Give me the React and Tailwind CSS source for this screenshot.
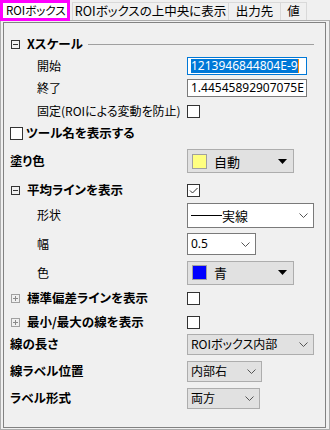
const jp = "font-['Noto_Sans_CJK_JP',sans-serif] [font-feature-settings:'palt']"

function Minus({ gray }) {
  return (
    <span className={`relative flex items-center justify-center w-[9px] h-[9px] border ${gray ? 'border-[#a0a0a0]' : 'border-[#333]'}`}>
      <span className={`w-[5px] h-px ${gray ? 'bg-[#a0a0a0]' : 'bg-[#333]'}`} />
    </span>
  )
}

function Plus() {
  return (
    <svg width="9" height="9" viewBox="0 0 9 9" className="shrink-0">
      <rect x="0.5" y="0.5" width="8" height="8" fill="none" stroke="#a0a0a0" />
      <path d="M2 4.5h5M4.5 2v5" stroke="#8a8a8a" />
    </svg>
  )
}

function Check({ checked }) {
  return (
    <span className="flex w-[13px] h-[13px] border border-[#333] bg-white">
      {checked && (
        <svg width="11" height="11" viewBox="0 0 11 11">
          <path d="M2 5.5L4.5 8L9.5 3" fill="none" stroke="#333" strokeWidth="1" />
        </svg>
      )}
    </span>
  )
}

function Chevron() {
  return (
    <svg width="9" height="5" viewBox="0 0 9 5" className="ml-auto mr-[5px] shrink-0">
      <path d="M0.5 0.5L4.5 4.5L8.5 0.5" fill="none" stroke="#555" />
    </svg>
  )
}

function ColorCombo({ color, label }) {
  return (
    <div className="flex items-center w-[107px] h-[24px] border border-[#adadad] bg-[#e1e1e1] pl-[4px]">
      <span className={`w-[15px] h-[15px] border border-[#a0a0a0] ${color}`} />
      <span className="ml-[7px] text-[13px] leading-none">{label}</span>
      <svg width="9" height="5" viewBox="0 0 9 5" className="ml-auto mr-[6px]">
        <polygon points="0,0 9,0 4.5,5" fill="#000" />
      </svg>
    </div>
  )
}

function Combo({ w, h, bg, border, children }) {
  return (
    <div className={`flex items-center ${w} ${h} ${bg} border ${border} pl-[3px]`}>
      <span className="text-[12px] leading-none flex items-center whitespace-nowrap">{children}</span>
      <Chevron />
    </div>
  )
}

function Row({ h, label, children }) {
  return (
    <div className={`flex items-center ${h}`}>
      <div className="w-[183px] flex items-center text-[12px] leading-none">{label}</div>
      <div className="flex items-center">{children}</div>
    </div>
  )
}

export default function App() {
  return (
    <div className={`w-[330px] h-[430px] bg-[#f0f0f0] text-black ${jp}`}>
      <div className="flex items-end h-[20px]">
        <div className="relative z-10 -mb-[1px] flex items-center w-[70px] h-[21px] border-[3px] border-[#ff00ff] bg-white pl-[3px] text-[11.5px] leading-none whitespace-nowrap overflow-hidden">
          ROIボックス
        </div>
        <div className="ml-[2px] flex items-center justify-center w-[157px] h-[18px] border-t border-l border-r border-[#d9d9d9] text-[12.5px] leading-none whitespace-nowrap">
          ROIボックスの上中央に表示
        </div>
        <div className="flex items-center justify-center w-[52px] h-[18px] border-t border-r border-[#d9d9d9] text-[12.5px] leading-none">
          出力先
        </div>
        <div className="flex items-center justify-center w-[26px] h-[18px] border-t border-r border-[#d9d9d9] text-[12.5px] leading-none">
          値
        </div>
      </div>

      <div className="h-[410px] border border-[#adadad] pl-[2px] pr-[3px] pt-[1px] pb-[1px]">
        <div className="h-full border border-[#828282] pt-[10px]">
          <div className="flex items-center h-[22px] pl-[7px]">
            <Minus />
            <span className="ml-[7px] text-[12.5px] font-bold leading-none">Xスケール</span>
            <span className="flex-1 h-px bg-[#a0a0a0] ml-[5px] mr-[11px]" />
          </div>

          <Row h="h-[21px]" label={<span className="pl-[33px]">開始</span>}>
            <div className="flex items-center w-[120px] h-[18px] border border-[#0078d7] bg-white pl-[3px] overflow-hidden">
              <span className="flex items-center h-[14px] bg-[#0078d7] text-white font-['Noto_Sans',sans-serif] text-[12px] leading-none whitespace-nowrap">
                1213946844804E-9
              </span>
              <span className="w-px h-[14px] bg-[#ff8c00]" />
            </div>
          </Row>

          <Row h="h-[24px]" label={<span className="pl-[33px]">終了</span>}>
            <div className="flex items-center w-[120px] h-[18px] border border-[#7a7a7a] bg-white pl-[3px] overflow-hidden">
              <span className="font-['Noto_Sans',sans-serif] text-[12px] leading-none whitespace-nowrap">1.44545892907075E</span>
            </div>
          </Row>

          <Row h="h-[22px]" label={<span className="pl-[33px] whitespace-nowrap">固定(ROIによる変動を防止)</span>}>
            <Check />
          </Row>

          <div className="flex items-center h-[22px] pl-[6px]">
            <Check />
            <span className="ml-[3px] text-[12.5px] font-bold leading-none">ツール名を表示する</span>
          </div>

          <Row h="h-[34px]" label={<span className="pl-[6px] font-bold text-[12.5px]">塗り色</span>}>
            <ColorCombo color="bg-[#ffff80]" label="自動" />
          </Row>

          <Row
            h="h-[24px]"
            label={
              <span className="pl-[7px] flex items-center">
                <Minus />
                <span className="ml-[7px] font-bold text-[12.5px]">平均ラインを表示</span>
              </span>
            }
          >
            <Check checked />
          </Row>

          <Row h="h-[26px]" label={<span className="pl-[33px]">形状</span>}>
            <Combo w="w-[127px]" h="h-[25px]" bg="bg-white" border="border-[#7a7a7a]">
              <span className="w-[31px] h-px bg-black" />
              <span className="text-[13px]">実線</span>
            </Combo>
          </Row>

          <Row h="h-[32px]" label={<span className="pl-[33px]">幅</span>}>
            <Combo w="w-[69px]" h="h-[22px]" bg="bg-white" border="border-[#7a7a7a]">
              <span className="font-['Noto_Sans',sans-serif]">0.5</span>
            </Combo>
          </Row>

          <Row h="h-[25px]" label={<span className="pl-[33px]">色</span>}>
            <ColorCombo color="bg-[#0000ff]" label="青" />
          </Row>

          <Row
            h="h-[26px]"
            label={
              <span className="pl-[7px] flex items-center">
                <Plus />
                <span className="ml-[7px] font-bold text-[12.5px]">標準偏差ラインを表示</span>
              </span>
            }
          >
            <Check />
          </Row>

          <Row
            h="h-[22px]"
            label={
              <span className="pl-[7px] flex items-center">
                <Plus />
                <span className="ml-[7px] font-bold text-[12.5px]">最小/最大の線を表示</span>
              </span>
            }
          >
            <Check />
          </Row>

          <Row h="h-[22px]" label={<span className="pl-[6px] font-bold text-[12.5px]">線の長さ</span>}>
            <Combo w="w-[127px]" h="h-[21px]" bg="bg-[#e1e1e1]" border="border-[#adadad]">
              ROIボックス内部
            </Combo>
          </Row>

          <Row h="h-[32px]" label={<span className="pl-[6px] font-bold text-[12.5px]">線ラベル位置</span>}>
            <Combo w="w-[75px]" h="h-[21px]" bg="bg-[#e1e1e1]" border="border-[#adadad]">
              内部右
            </Combo>
          </Row>

          <Row h="h-[22px]" label={<span className="pl-[6px] font-bold text-[12.5px]">ラベル形式</span>}>
            <Combo w="w-[73px]" h="h-[21px]" bg="bg-[#e1e1e1]" border="border-[#adadad]">
              両方
            </Combo>
          </Row>
        </div>
      </div>
    </div>
  )
}
